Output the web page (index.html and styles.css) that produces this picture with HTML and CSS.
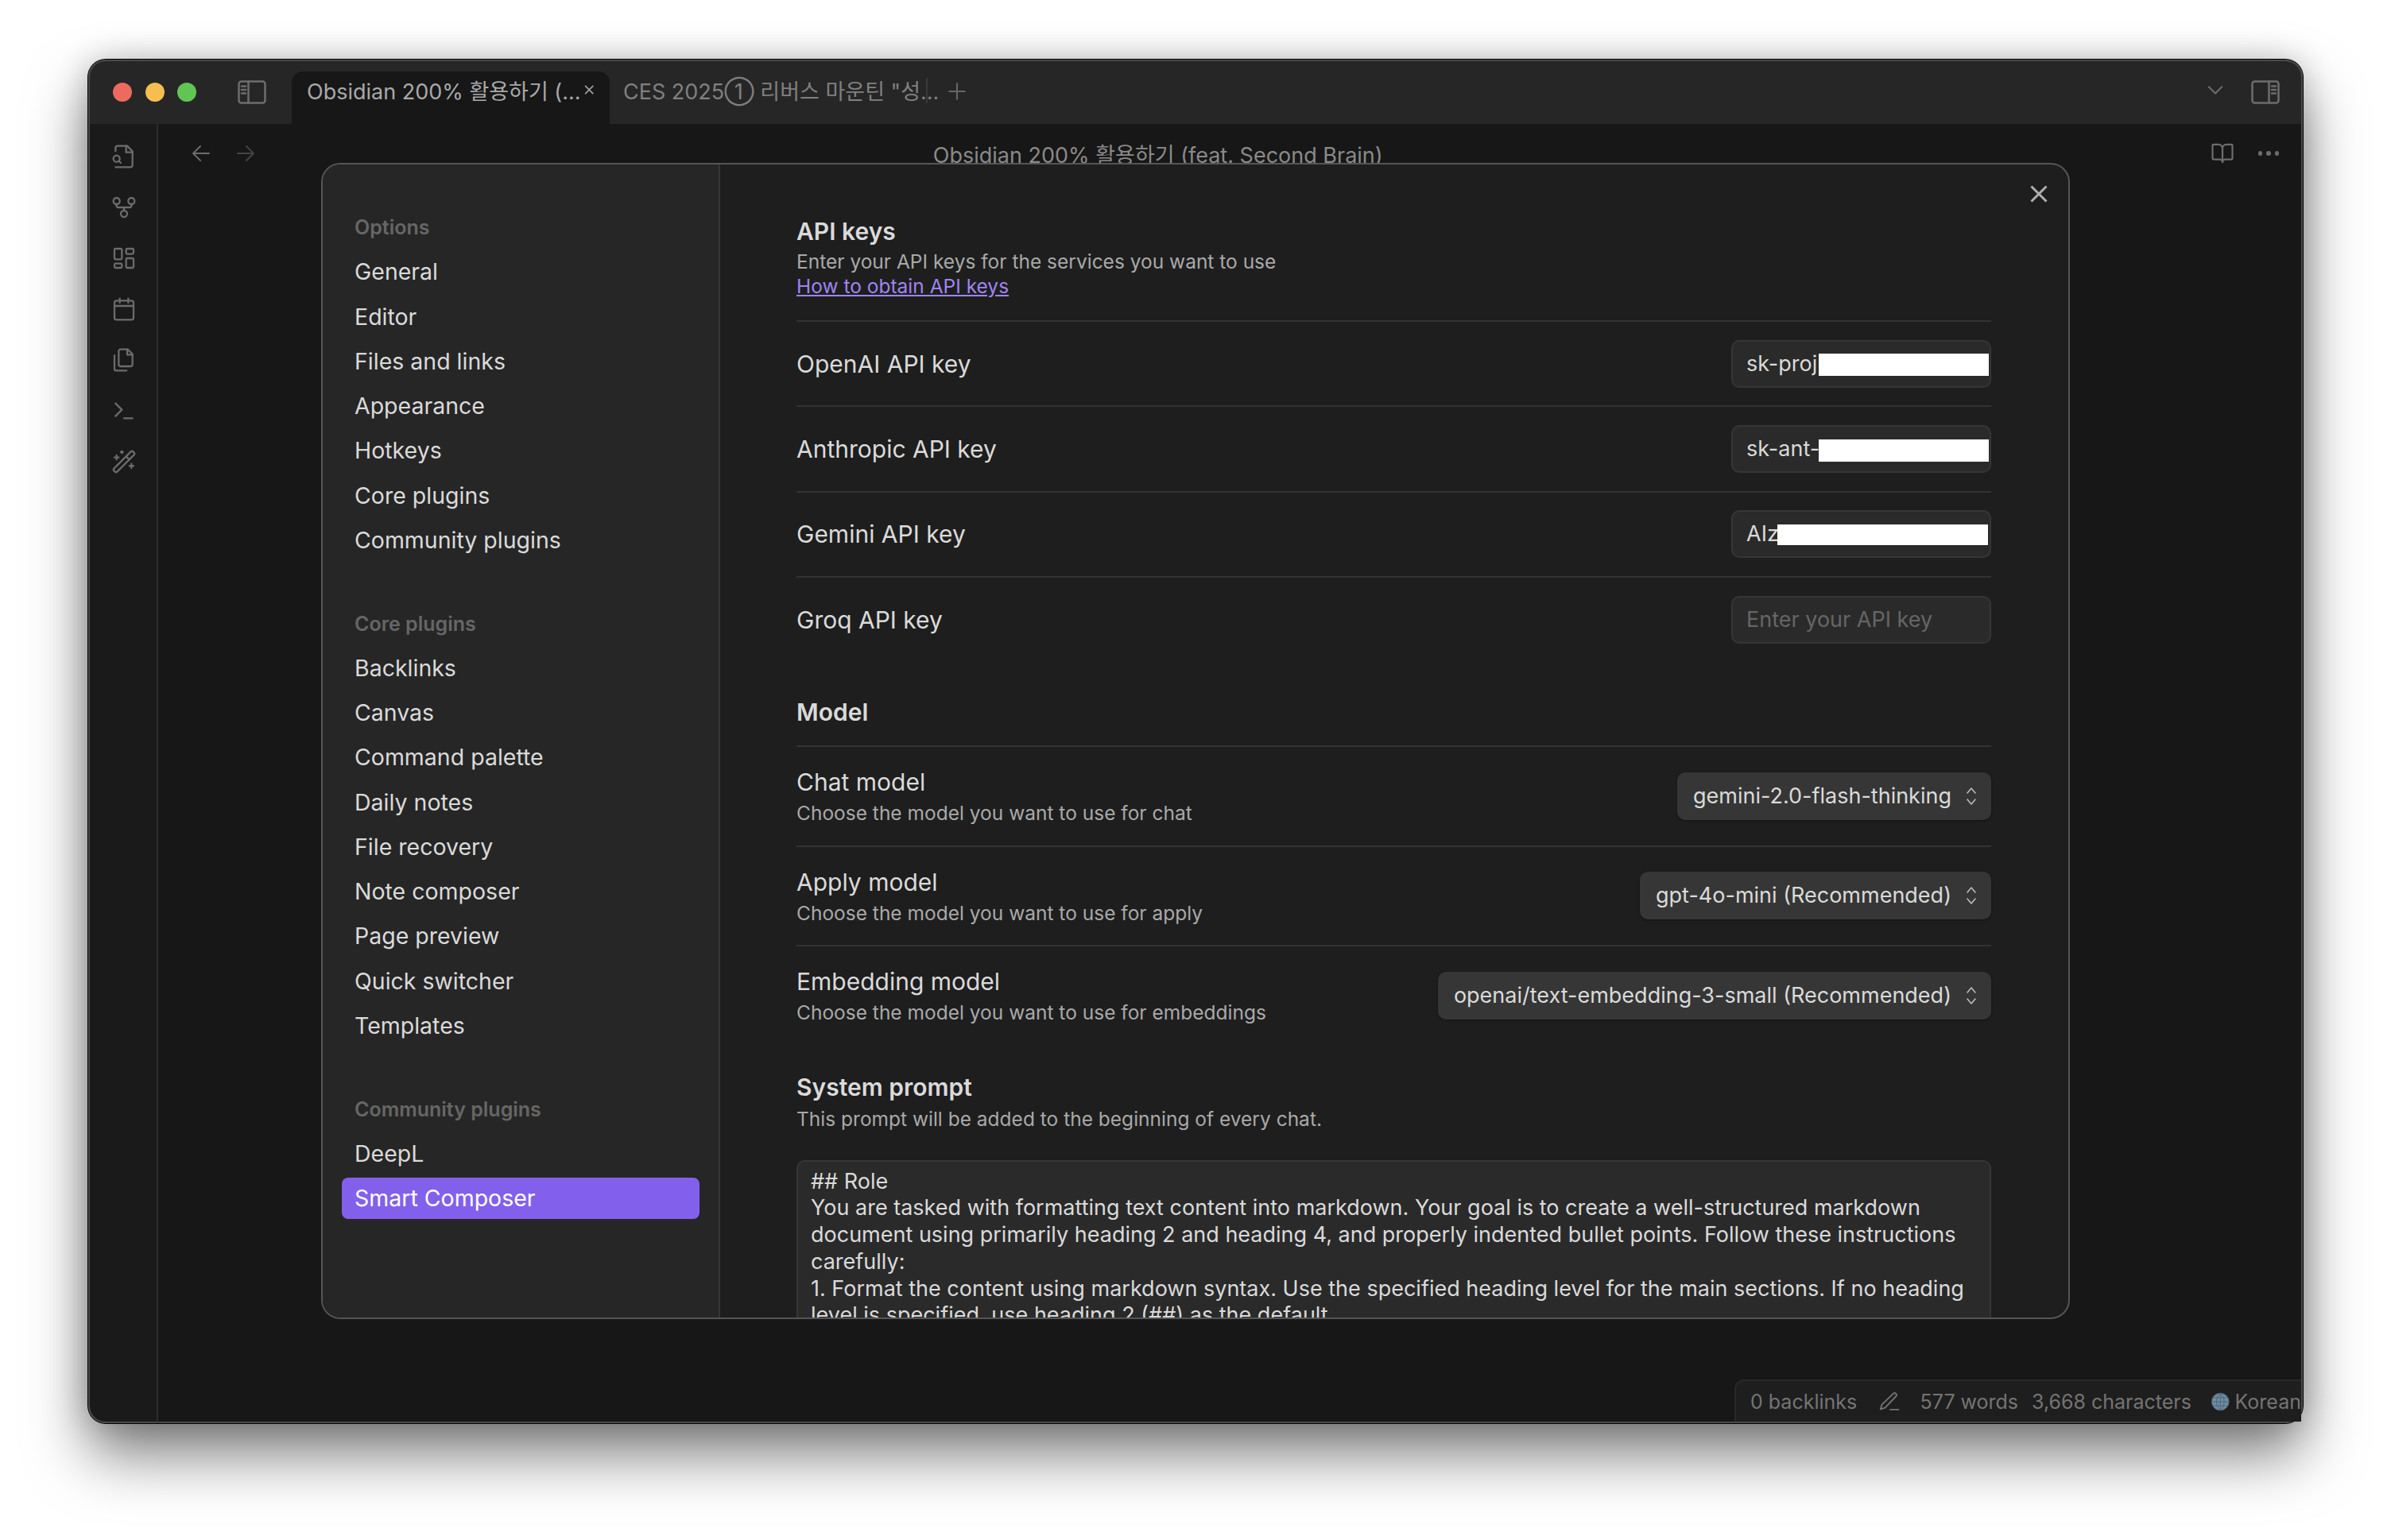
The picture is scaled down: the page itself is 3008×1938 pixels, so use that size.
FILE: index.html
```html
<!DOCTYPE html>
<html lang="en">
<head>
<meta charset="utf-8">
<title>Obsidian settings</title>
<link rel="stylesheet" href="styles.css">
</head>
<body>
<svg class="sprite" width="0" height="0">
  <defs>
    <symbol id="i-panel-left" viewBox="0 0 36 30"><rect x="1.5" y="1.5" width="33" height="27" rx="3"/><path d="M13.5 1.5v27M5 7.5h5M5 12h5M5 16.5h5"/></symbol>
    <symbol id="i-panel-right" viewBox="0 0 36 30"><rect x="1.5" y="1.5" width="33" height="27" rx="3"/><path d="M22.5 1.5v27M26 7.5h5M26 12h5M26 16.5h5"/></symbol>
  </defs>
</svg>
<div class="window">
  <header class="titlebar">
    <div class="lights"><span class="light red"></span><span class="light yellow"></span><span class="light green"></span></div>
    <svg class="ic panel-left"><use href="#i-panel-left"/></svg>
    <div class="tab active">
      <span class="tab-title">Obsidian 200% 활용하기 (...</span>
      <svg class="tab-x" viewBox="0 0 24 24"><path d="M18 6 6 18M6 6l12 12"/></svg>
    </div>
    <div class="tab plain"><span class="tab-title">CES 2025① 리버스 마운틴 "성...</span></div>
    <svg class="tab-plus" viewBox="0 0 24 24"><path d="M12 3v18M3 12h18"/></svg>
    <div class="spacer"></div>
    <svg class="chev" viewBox="0 0 24 24"><path d="m3 8 9 9 9-9"/></svg>
    <svg class="ic panel-right"><use href="#i-panel-right"/></svg>
  </header>
  <div class="body">
    <nav class="ribbon">
      <svg viewBox="0 0 24 24"><path d="M4 22h14a2 2 0 0 0 2-2V7l-5-5H6a2 2 0 0 0-2 2v3"/><path d="M14 2v6h6"/><path d="M5 17a3 3 0 1 0 0-6 3 3 0 0 0 0 6z"/><path d="m9 18-1.8-1.8"/></svg>
      <svg viewBox="0 0 24 24"><circle cx="12" cy="18" r="3"/><circle cx="5" cy="6" r="3"/><circle cx="19" cy="6" r="3"/><path d="M5 9v1.5c0 .8.7 1.5 1.5 1.5h11c.8 0 1.5-.7 1.5-1.5V9M12 12v3"/></svg>
      <svg viewBox="0 0 24 24"><rect x="3" y="3" width="7" height="10" rx="1"/><rect x="14" y="3" width="7" height="5" rx="1"/><rect x="14" y="12" width="7" height="9" rx="1"/><rect x="3" y="17" width="7" height="4" rx="1"/></svg>
      <svg viewBox="0 0 24 24"><rect x="3" y="4" width="18" height="18" rx="2"/><path d="M8 2v4M16 2v4M3 9h18"/></svg>
      <svg viewBox="0 0 24 24"><path d="M15.5 2H8.6c-.9 0-1.6.7-1.6 1.6v12.8c0 .9.7 1.6 1.6 1.6h9.8c.9 0 1.6-.7 1.6-1.6V6.5L15.5 2z"/><path d="M3 7.6v12.8c0 .9.7 1.6 1.6 1.6h9.8"/><path d="M15 2v5h5"/></svg>
      <svg viewBox="0 0 24 24"><path d="m4 17 6-6-6-6M12 19h8"/></svg>
      <svg viewBox="0 0 24 24"><path d="m21.64 3.64-1.28-1.28a1.21 1.21 0 0 0-1.72 0L2.36 18.64a1.21 1.21 0 0 0 0 1.72l1.28 1.28a1.2 1.2 0 0 0 1.72 0L21.64 5.36a1.2 1.2 0 0 0 0-1.72"/><path d="m14 7 3 3M5 6v4M19 14v4M10 2v2M7 8H3M21 16h-4M11 3H9"/></svg>
    </nav>
    <main class="editor">
      <div class="viewbar">
        <svg class="arrow" viewBox="0 0 24 24"><path d="m11 3-9 9 9 9M2 12h20"/></svg>
        <svg class="arrow dim" viewBox="0 0 24 24"><path d="m13 3 9 9-9 9M22 12H2"/></svg>
        <div class="viewtitle">Obsidian 200% 활용하기 (feat. Second Brain)</div>
        <svg class="book" viewBox="0 0 24 24"><path d="M12 7v14M3 18a1 1 0 0 1-1-1V4a1 1 0 0 1 1-1h5a4 4 0 0 1 4 4 4 4 0 0 1 4-4h5a1 1 0 0 1 1 1v13a1 1 0 0 1-1 1h-6a3 3 0 0 0-3 3 3 3 0 0 0-3-3z"/></svg>
        <div class="dots"><i></i><i></i><i></i></div>
      </div>
    </main>
  </div>

  <footer class="status">
    <span>0 backlinks</span>
    <svg class="pencil" viewBox="0 0 28 28"><path d="M20 3.2c1-1 2.600-1 3.600 0s1 2.600 0 3.600L9 22l-6 2 1.800-6.200z"/><path d="M16 24.500h11"/></svg>
    <span class="words">577 words</span>
    <span class="chars">3,668 characters</span>
    <svg class="globe" viewBox="0 0 24 24"><circle cx="12" cy="12" r="11.500"/><path d="M.5 12h23M2 6.500h20M2 17.500h20M12 .5v23M12 .5C5 6 5 18 12 23.500M12 .5c7 5.500 7 17.500 0 23"/></svg>
    <span class="lang">Korean</span>
  </footer>

  <section class="modal">
    <aside class="side">
      <h3 class="side-head">Options</h3>
      <a class="side-item">General</a>
      <a class="side-item">Editor</a>
      <a class="side-item">Files and links</a>
      <a class="side-item">Appearance</a>
      <a class="side-item">Hotkeys</a>
      <a class="side-item">Core plugins</a>
      <a class="side-item">Community plugins</a>
      <h3 class="side-head next">Core plugins</h3>
      <a class="side-item">Backlinks</a>
      <a class="side-item">Canvas</a>
      <a class="side-item">Command palette</a>
      <a class="side-item">Daily notes</a>
      <a class="side-item">File recovery</a>
      <a class="side-item">Note composer</a>
      <a class="side-item">Page preview</a>
      <a class="side-item">Quick switcher</a>
      <a class="side-item">Templates</a>
      <h3 class="side-head next">Community plugins</h3>
      <a class="side-item">DeepL</a>
      <a class="side-item selected">Smart Composer</a>
    </aside>
    <div class="content">
      <svg class="close" viewBox="0 0 22 22"><path d="M1.500 1.500l19 19M20.500 1.500l-19 19"/></svg>
      <div class="section-head keys">
        <h2>API keys</h2>
        <p class="desc">Enter your API keys for the services you want to use</p>
        <a class="link">How to obtain API keys</a>
      </div>
      <div class="row key"><span class="label">OpenAI API key</span><div class="input">sk-proj-<b class="redact r1"></b></div></div>
      <div class="row key"><span class="label">Anthropic API key</span><div class="input">sk-ant-a<b class="redact r2"></b></div></div>
      <div class="row key"><span class="label">Gemini API key</span><div class="input">AIza<b class="redact r3"></b></div></div>
      <div class="row key"><span class="label">Groq API key</span><div class="input empty">Enter your API key</div></div>

      <div class="section-head model"><h2>Model</h2></div>
      <div class="row sel">
        <div><div class="label">Chat model</div><p class="desc">Choose the model you want to use for chat</p></div>
        <div class="select">gemini-2.0-flash-thinking<svg viewBox="0 0 14 26"><path d="m2 9 5-6 5 6M2 17l5 6 5-6"/></svg></div>
      </div>
      <div class="row sel">
        <div><div class="label">Apply model</div><p class="desc">Choose the model you want to use for apply</p></div>
        <div class="select">gpt-4o-mini (Recommended)<svg viewBox="0 0 14 26"><path d="m2 9 5-6 5 6M2 17l5 6 5-6"/></svg></div>
      </div>
      <div class="row sel">
        <div><div class="label">Embedding model</div><p class="desc">Choose the model you want to use for embeddings</p></div>
        <div class="select">openai/text-embedding-3-small (Recommended)<svg viewBox="0 0 14 26"><path d="m2 9 5-6 5 6M2 17l5 6 5-6"/></svg></div>
      </div>

      <div class="section-head prompt">
        <h2>System prompt</h2>
        <p class="desc">This prompt will be added to the beginning of every chat.</p>
      </div>
      <div class="textarea">## Role
You are tasked with formatting text content into markdown. Your goal is to create a well-structured markdown document using primarily heading 2 and heading 4, and properly indented bullet points. Follow these instructions carefully:
1. Format the content using markdown syntax. Use the specified heading level for the main sections. If no heading level is specified, use heading 2 (##) as the default.
2. For subsections within the main sections, use heading 4 (####).</div>
    </div>
  </section>
</div>
</body>
</html>
```
FILE: styles.css
```css
* { box-sizing: border-box; }
html, body { margin: 0; height: 100%; }
body {
  background: #fff;
  font-family: Inter, "Noto Sans CJK KR", sans-serif;
  padding: 75px 111px 0 111px;
  overflow: hidden;
}
.sprite { position: absolute; }
svg { fill: none; stroke: currentColor; stroke-linecap: round; stroke-linejoin: round; }

.window {
  position: relative;
  width: 2786px;
  height: 1716px;
  border-radius: 22px;
  background: #171717;
  box-shadow: 0 0 0 1px #000, inset 0 0 0 2px #4a4a4a, 0 40px 75px rgba(0,0,0,.5), 0 0 40px rgba(0,0,0,.22);
  display: flex;
  flex-direction: column;
  overflow: visible;
}

/* Title bar */
.titlebar {
  height: 81px;
  flex: none;
  background: #262626;
  border-radius: 22px 22px 0 0;
  border-top: 2px solid #4a4a4a;
  border-left: 2px solid #4a4a4a;
  border-right: 2px solid #4a4a4a;
  display: flex;
  align-items: flex-start;
  color: #6d6d6d;
}
.lights { display: flex; gap: 16.500px; margin: 27px 0 0 29px; }
.light { width: 24px; height: 24px; border-radius: 50%; }
.red { background: #ee6a5f; }
.yellow { background: #f5bf4f; }
.green { background: #61c554; }
.ic { width: 36px; height: 30px; stroke-width: 2.500; }
.panel-left { margin: 24px 32px 0 52px; }
.tab { height: 66px; margin-top: 13px; display: flex; align-items: center; font-size: 27px; white-space: nowrap; padding-top: 0; }
.tab.active {
  width: 400px;
  background: #171717;
  border-radius: 14px 14px 0 0;
  padding: 0 16px 20px 19px;
  color: #a9a9a9;
  justify-content: space-between;
}
.tab-x { width: 26px; height: 26px; stroke: #a0a0a0; stroke-width: 2; stroke-linecap: butt; }
.tab.plain {
  width: 400px;
  padding: 0 0 20px 17px;
  color: #808080;
  position: relative;
}
.tab.plain::after { content: ""; position: absolute; right: 0; top: 8px; height: 32px; width: 2px; background: #3a3a3a; }
.tab-plus { width: 26px; height: 26px; margin: 25px 0 0 24px; stroke-width: 2; stroke: #666; }
.spacer { flex: 1; }
.chev { width: 22px; height: 22px; margin: 25px 34px 0 0; stroke-width: 2.200; }
.panel-right { margin: 24px 27px 0 0; }

/* Body */
.body { flex: 1; display: flex; min-height: 0; }
.ribbon {
  width: 88px;
  flex: none;
  border-right: 2px solid #2c2c2c;
  border-left: 2px solid #4a4a4a;
  border-bottom: 2px solid #4a4a4a;
  border-bottom-left-radius: 22px;
  background: #1a1a1a;
  color: #6c6c6c;
  padding: 25px 0 0 27px;
  display: flex;
  flex-direction: column;
  gap: 32px;
}
.ribbon svg { width: 32px; height: 32px; stroke-width: 1.700; }
.editor {
  flex: 1;
  background: #171717;
  border-right: 2px solid #4a4a4a;
  border-bottom: 2px solid #4a4a4a;
  border-bottom-right-radius: 22px;
}
.viewbar { height: 74px; display: flex; align-items: center; padding: 0 28px 0 42px; color: #6d6d6d; position: relative; }
.arrow { width: 24px; height: 24px; stroke-width: 1.800; margin-right: 32px; color: #6d6d6d; }
.arrow.dim { color: #444; }
.viewtitle { flex: 1; text-align: center; font-size: 27px; color: #8a8a8a; padding-right: 220px; }
.book { width: 30px; height: 30px; stroke-width: 1.800; margin-right: 30px; }
.dots { display: flex; gap: 5px; }
.dots i { width: 5.500px; height: 5.500px; border-radius: 50%; background: #6d6d6d; }

/* Status */
.status {
  position: absolute;
  right: 2px;
  bottom: 2px;
  width: 713px;
  height: 53px;
  background: #1e1e1e;
  border: 2px solid #282828;
  border-width: 2px 0 0 2px;
  border-top-left-radius: 12px;
  display: flex;
  align-items: center;
  padding-left: 18px;
  font-size: 25px;
  color: #747474;
  white-space: nowrap;
}
.pencil { width: 28px; height: 28px; margin-left: 27px; stroke-width: 2; }
.words { margin-left: 26px; }
.chars { margin-left: 17px; }
.globe { width: 24px; height: 24px; margin-left: 25px; fill: #6f8ea3; stroke: #4a6778; stroke-width: 1; }
.lang { margin-left: 7px; }

/* Modal */
.modal {
  position: absolute;
  left: 293px;
  top: 130px;
  width: 2200px;
  height: 1455px;
  background: #1e1e1e;
  border: 2px solid #555;
  border-radius: 24px;
  display: flex;
  overflow: hidden;
}
.side {
  width: 500px;
  flex: none;
  background: #262626;
  border-right: 2px solid #363636;
  padding: 51px 24px 0 24px;
}
.side-head {
  margin: 0;
  height: 56.250px;
  line-height: 56.250px;
  padding-left: 16px;
  font-size: 25px;
  font-weight: 600;
  color: #666;
}
.side-head.next { margin-top: 48.500px; }
.side-item {
  display: block;
  height: 56.250px;
  line-height: 56.250px;
  padding-left: 16px;
  font-size: 28.500px;
  color: #dadada;
  border-radius: 8px;
}
.side-item.selected { height: 52px; line-height: 52px; margin-top: 2px; background: #8360ec; color: #fff; }

.content { flex: 1; position: relative; padding: 0 97px 0 96px; min-width: 0; }
.close { position: absolute; right: 26px; top: 26px; width: 22px; height: 22px; stroke: #b0b0b0; stroke-width: 3; stroke-linecap: butt; }
h2 { margin: 0; font-size: 30px; font-weight: 600; color: #dadada; line-height: 40px; }
.desc { margin: 0; font-size: 24.500px; line-height: 31px; color: #a9a9a9; }
.link { display: block; font-size: 24.500px; line-height: 31px; color: #9f85f0; text-decoration: underline; }
.section-head.keys { padding-top: 64px; height: 196px; }
.section-head.keys h2 { margin-bottom: 3px; }
.row { border-top: 2px solid #333; display: flex; align-items: center; justify-content: space-between; }
.row.key { height: 107.300px; }
.row.sel { height: 125.500px; }
.label { font-size: 30px; line-height: 40px; color: #dadada; }
.sel .label { margin-bottom: 4px; }
.input {
  width: 327px;
  height: 60px;
  background: #2a2a2a;
  border: 2px solid #363636;
  border-radius: 10px;
  font-size: 27px;
  line-height: 56px;
  padding-left: 17px;
  color: #dadada;
  position: relative;
  overflow: hidden;
  white-space: nowrap;
}
.input.empty { color: #666; }
.redact { position: absolute; background: #fff; }
.r1 { left: 108px; right: 1px; top: 15px; height: 28px; }
.r2 { left: 108px; right: 1px; top: 16px; height: 28px; }
.r3 { left: 56px; right: 2px; top: 16px; height: 26px; }
.section-head.model { height: 106px; padding-top: 44px; }
.select {
  height: 60px;
  background: #363636;
  border-radius: 10px;
  font-size: 27px;
  line-height: 60px;
  padding: 0 18px 0 20px;
  color: #dadada;
  display: flex;
  align-items: center;
  gap: 18px;
  white-space: nowrap;
  box-shadow: 0 1px 3px rgba(0,0,0,.4);
}
.select svg { width: 14px; height: 26px; stroke: #bbb; stroke-width: 1.600; margin-left: auto; }
.row.sel:nth-of-type(n) .select:first-of-type { }
.section-head.prompt { padding-top: 33px; height: 145px; }
.section-head.prompt h2 { margin-bottom: 5px; }
.textarea {
  height: 300px;
  background: #2a2a2a;
  border: 2px solid #363636;
  border-radius: 10px;
  padding: 8px 16px;
  font-size: 27px;
  line-height: 33.700px;
  color: #dadada;
  white-space: pre-wrap;
  overflow: hidden;
}
```
